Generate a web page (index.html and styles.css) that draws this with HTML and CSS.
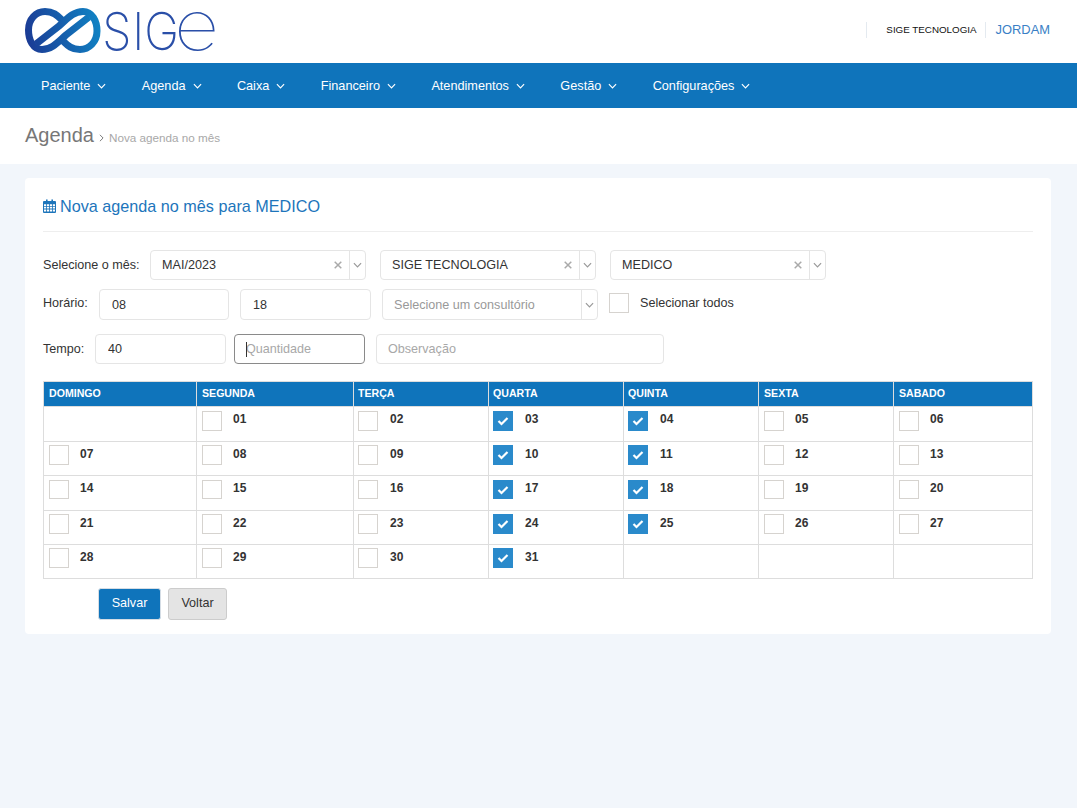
FILE: index.html
```html
<!DOCTYPE html>
<html lang="pt-BR">
<head>
<meta charset="utf-8">
<title>SIGE - Nova agenda no mês</title>
<link rel="stylesheet" href="styles.css">
</head>
<body>
<svg width="0" height="0" class="defs">
  <defs>
    <symbol id="chev" viewBox="0 0 10 6"><path d="M1 1l4 4 4-4" fill="none" stroke="currentColor" stroke-width="1.3"/></symbol>
    <symbol id="tick" viewBox="0 0 12 10"><path d="M1.5 5l3 3 6-6" fill="none" stroke="#fff" stroke-width="2.2"/></symbol>
    <symbol id="x" viewBox="0 0 8 8"><path d="M.7.7l6.6 6.6M7.3.7L.7 7.3" fill="none" stroke="currentColor" stroke-width="1.5"/></symbol>
  </defs>
</svg>
<header class="top">
  <a class="logo" href="#">
    <svg class="logo-mark" width="190" height="46" viewBox="0 0 190 46">
      <defs>
        <linearGradient id="lg" gradientUnits="userSpaceOnUse" x1="0" y1="30" x2="75" y2="15"><stop offset="0" stop-color="#1b3a94"/><stop offset="1" stop-color="#1083c4"/></linearGradient>
        <linearGradient id="lt" gradientUnits="userSpaceOnUse" x1="80" y1="0" x2="190" y2="0"><stop offset="0" stop-color="#2a4fa8"/><stop offset="1" stop-color="#3d9ad0"/></linearGradient>
      </defs>
      <g fill="none" stroke="url(#lg)" stroke-width="7">
        <path d="M11 36L34 18C42 11 48 3.500 58 3.500 67 3.500 72 13 72 23 72 34 64 41.500 55 41.500 47 41.500 43 38 38 33"/>
        <path d="M64 9L41 27C33 34 27 41.500 17 41.500 8 41.500 3.500 32 3.500 22 3.500 11 11 3.500 20 3.500 28 3.500 32 7 37 12"/>
      </g>
      <text class="logo-text" transform="translate(77.250,42) scale(.9,1)" x="0 33.300 46.600" fill="url(#lt)">SIG</text>
      <text class="logo-text logo-e" transform="translate(149,42) scale(1.13,1)" fill="url(#lt)">e</text>
    </svg>
  </a>
  <div class="top-user">
    <span class="company">SIGE TECNOLOGIA</span>
    <span class="user">JORDAM</span>
  </div>
</header>
<nav class="nav">
  <a class="nav-item">Paciente<svg class="nav-chev"><use href="#chev"/></svg></a>
  <a class="nav-item">Agenda<svg class="nav-chev"><use href="#chev"/></svg></a>
  <a class="nav-item">Caixa<svg class="nav-chev"><use href="#chev"/></svg></a>
  <a class="nav-item">Financeiro<svg class="nav-chev"><use href="#chev"/></svg></a>
  <a class="nav-item">Atendimentos<svg class="nav-chev"><use href="#chev"/></svg></a>
  <a class="nav-item">Gestão<svg class="nav-chev"><use href="#chev"/></svg></a>
  <a class="nav-item">Configurações<svg class="nav-chev"><use href="#chev"/></svg></a>
</nav>
<div class="crumb">
  <h1 class="crumb-title">Agenda</h1>
  <svg class="crumb-sep" viewBox="0 0 6 10"><path d="M1 1l4 4-4 4" fill="none" stroke="currentColor" stroke-width="1.2"/></svg>
  <span class="crumb-sub">Nova agenda no mês</span>
</div>
<main class="card">
  <h2 class="card-title">
    <svg class="cal" width="13" height="14" viewBox="0 0 13 14">
      <path fill="#1d75bb" d="M1 2h2V.6h1.6V2h3.8V.6H10V2h2a1 1 0 0 1 1 1v10a1 1 0 0 1-1 1H1a1 1 0 0 1-1-1V3a1 1 0 0 1 1-1z"/>
      <path fill="#fff" d="M1 5.2h2.2v1.8H1zM4 5.2h2.2v1.8H4zM7 5.2h2.2v1.8H7zM10 5.2h2v1.8h-2zM1 7.8h2.2v1.8H1zM4 7.8h2.2v1.8H4zM7 7.8h2.2v1.8H7zM10 7.8h2v1.8h-2zM1 10.4h2.2v2.2H1zM4 10.4h2.2v2.2H4zM7 10.4h2.2v2.2H7zM10 10.4h2v2.2h-2z"/>
    </svg>
    Nova agenda no mês para MEDICO
  </h2>
  <div class="row row-1">
    <label class="lbl lbl-mes">Selecione o mês:</label>
    <div class="select s1"><span class="select-val">MAI/2023</span><svg class="sel-x"><use href="#x"/></svg><span class="sel-arrow"><svg class="sel-chev"><use href="#chev"/></svg></span></div>
    <div class="select s1 ml14"><span class="select-val">SIGE TECNOLOGIA</span><svg class="sel-x"><use href="#x"/></svg><span class="sel-arrow"><svg class="sel-chev"><use href="#chev"/></svg></span></div>
    <div class="select s1 ml14"><span class="select-val">MEDICO</span><svg class="sel-x"><use href="#x"/></svg><span class="sel-arrow"><svg class="sel-chev"><use href="#chev"/></svg></span></div>
  </div>
  <div class="row row-2">
    <label class="lbl lbl-hor">Horário:</label>
    <input class="field f-a" value="08">
    <input class="field f-b" value="18">
    <div class="select s2"><span class="select-val muted">Selecione um consultório</span><span class="sel-arrow"><svg class="sel-chev"><use href="#chev"/></svg></span></div>
    <span class="cb cb-all"></span>
    <span class="lbl lbl-all">Selecionar todos</span>
  </div>
  <div class="row row-3">
    <label class="lbl lbl-tem">Tempo:</label>
    <input class="field f-c" value="40">
    <div class="field f-d is-focus"><span class="caret"></span>Quantidade</div>
    <input class="field f-e" placeholder="Observação">
  </div>
  <table class="cal-table">
    <thead>
      <tr><th>DOMINGO</th><th>SEGUNDA</th><th>TERÇA</th><th>QUARTA</th><th>QUINTA</th><th>SEXTA</th><th>SABADO</th></tr>
    </thead>
    <tbody>
      <tr>
        <td></td>
        <td><span class="day"><span class="cb"></span><b>01</b></span></td>
        <td><span class="day"><span class="cb"></span><b>02</b></span></td>
        <td><span class="day"><span class="cb on"><svg class="tick"><use href="#tick"/></svg></span><b>03</b></span></td>
        <td><span class="day"><span class="cb on"><svg class="tick"><use href="#tick"/></svg></span><b>04</b></span></td>
        <td><span class="day"><span class="cb"></span><b>05</b></span></td>
        <td><span class="day"><span class="cb"></span><b>06</b></span></td>
      </tr>
      <tr>
        <td><span class="day"><span class="cb"></span><b>07</b></span></td>
        <td><span class="day"><span class="cb"></span><b>08</b></span></td>
        <td><span class="day"><span class="cb"></span><b>09</b></span></td>
        <td><span class="day"><span class="cb on"><svg class="tick"><use href="#tick"/></svg></span><b>10</b></span></td>
        <td><span class="day"><span class="cb on"><svg class="tick"><use href="#tick"/></svg></span><b>11</b></span></td>
        <td><span class="day"><span class="cb"></span><b>12</b></span></td>
        <td><span class="day"><span class="cb"></span><b>13</b></span></td>
      </tr>
      <tr>
        <td><span class="day"><span class="cb"></span><b>14</b></span></td>
        <td><span class="day"><span class="cb"></span><b>15</b></span></td>
        <td><span class="day"><span class="cb"></span><b>16</b></span></td>
        <td><span class="day"><span class="cb on"><svg class="tick"><use href="#tick"/></svg></span><b>17</b></span></td>
        <td><span class="day"><span class="cb on"><svg class="tick"><use href="#tick"/></svg></span><b>18</b></span></td>
        <td><span class="day"><span class="cb"></span><b>19</b></span></td>
        <td><span class="day"><span class="cb"></span><b>20</b></span></td>
      </tr>
      <tr>
        <td><span class="day"><span class="cb"></span><b>21</b></span></td>
        <td><span class="day"><span class="cb"></span><b>22</b></span></td>
        <td><span class="day"><span class="cb"></span><b>23</b></span></td>
        <td><span class="day"><span class="cb on"><svg class="tick"><use href="#tick"/></svg></span><b>24</b></span></td>
        <td><span class="day"><span class="cb on"><svg class="tick"><use href="#tick"/></svg></span><b>25</b></span></td>
        <td><span class="day"><span class="cb"></span><b>26</b></span></td>
        <td><span class="day"><span class="cb"></span><b>27</b></span></td>
      </tr>
      <tr>
        <td><span class="day"><span class="cb"></span><b>28</b></span></td>
        <td><span class="day"><span class="cb"></span><b>29</b></span></td>
        <td><span class="day"><span class="cb"></span><b>30</b></span></td>
        <td><span class="day"><span class="cb on"><svg class="tick"><use href="#tick"/></svg></span><b>31</b></span></td>
        <td></td>
        <td></td>
        <td></td>
      </tr>
    </tbody>
  </table>
  <div class="actions">
    <button class="btn btn-primary">Salvar</button>
    <button class="btn btn-default">Voltar</button>
  </div>
</main>
</body>
</html>
```
FILE: styles.css
```css
* { box-sizing: border-box; }
html, body { margin: 0; padding: 0; }
body {
  min-height: 808px;
  background: #f2f6fb;
  font-family: "Liberation Sans", Arial, sans-serif;
  font-size: 13px;
  color: #333;
}
.defs { position: absolute; }

/* Header */
.top {
  height: 63px;
  background: #fff;
  display: flex;
  align-items: flex-start;
  justify-content: space-between;
  padding: 0 27px 0 25px;
}
.logo { display: block; margin-top: 8px; height: 46px; }
.logo-mark { display: block; overflow: visible; }
.logo-text { font-family: Inter, "Liberation Sans", sans-serif; font-weight: 200; font-size: 52px; }
.logo-e { font-size: 70px; font-weight: 100; }
.top-user { display: flex; align-items: center; margin-top: 22px; height: 16px; }
.company {
  border-left: 1px solid #e4eaf0;
  border-right: 1px solid #e4eaf0;
  padding: 0 8px 0 19px;
  font-size: 9.8px;
  line-height: 16px;
  color: #111;
}
.user { padding-left: 10px; font-size: 12.9px; color: #3a7fc6; position: relative; top: -1px; }

/* Nav */
.nav {
  height: 45px;
  background: #0f74bb;
  display: flex;
  align-items: center;
  padding-left: 41px;
  color: #fff;
}
.nav-item {
  display: flex;
  align-items: center;
  margin-right: 35.4px;
  font-size: 12.7px;
  color: #fff;
}
.nav-chev { width: 9px; height: 6px; margin-left: 7px; }

/* Breadcrumb */
.crumb {
  height: 56px;
  background: #fff;
  display: flex;
  align-items: center;
  padding-left: 25px;
}
.crumb-title { margin: 0 0 2px; font-size: 20px; font-weight: 400; color: #777; }
.crumb-sep { width: 5px; height: 8px; margin: 3px 5px 0 5px; color: #777; }
.crumb-sub { font-size: 11.7px; color: #a8a8a8; margin-top: 3px; }

/* Card */
.card {
  margin: 14px 26px 0 25px;
  height: 456px;
  background: #fff;
  border-radius: 4px;
  padding: 18px;
}
.card-title {
  margin: 0 0 18px;
  height: 36px;
  border-bottom: 1px solid #eee;
  font-size: 16.2px;
  font-weight: 400;
  line-height: 20px;
  color: #1d75bb;
  display: flex;
  align-items: flex-start;
  gap: 4px;
}
.cal { margin-top: 3px; }

/* Form */
.row { display: flex; align-items: flex-start; }
.row-1 { height: 30px; }
.row-2 { height: 31px; margin-top: 9px; }
.row-3 { height: 30px; margin-top: 14px; }
.lbl { color: #333; font-size: 12.6px; line-height: 16px; }
.lbl-mes { width: 107px; margin-top: 7px; }
.lbl-hor { width: 56px; margin-top: 6px; }
.lbl-tem { width: 52px; margin-top: 7px; }
.lbl-all { margin: 6px 0 0 11px; }
.ml14 { margin-left: 14px; }

.select {
  display: flex;
  align-items: center;
  height: 30px;
  border: 1px solid #e5e5e5;
  border-radius: 4px;
  background: #fff;
  font-size: 12.6px;
  color: #333;
}
.s1 { width: 216px; }
.s2 { width: 216px; height: 31px; margin-left: 11px; }
.select-val { flex: 1; padding-left: 11px; white-space: nowrap; }
.muted { color: #999; }
.sel-x { width: 8px; height: 8px; margin-right: 7px; color: #aaa; }
.sel-arrow {
  width: 16px;
  align-self: stretch;
  border-left: 1px solid #e5e5e5;
  display: flex;
  align-items: center;
  justify-content: center;
  color: #999;
}
.sel-chev { width: 9px; height: 6px; }

.field {
  height: 30px;
  border: 1px solid #e5e5e5;
  border-radius: 4px;
  background: #fff;
  padding: 0 12px;
  font: 12.6px "Liberation Sans", Arial, sans-serif;
  color: #333;
  outline: none;
  display: block;
}
.field::placeholder { color: #a8a8a8; opacity: 1; }
.f-a { width: 130px; height: 31px; }
.f-b { width: 131px; height: 31px; margin-left: 11px; }
.f-c { width: 131px; }
.f-d { width: 131px; margin-left: 8px; padding: 0 0 0 11px; line-height: 28px; color: #a8a8a8; position: relative; }
.f-e { width: 288px; margin-left: 11px; padding: 0 11px; }
.is-focus { border-color: #8a8a8a; }
.caret { position: absolute; left: 11px; top: 7px; width: 1px; height: 15px; background: #333; }

/* Checkboxes */
.cb {
  display: inline-flex;
  align-items: center;
  justify-content: center;
  flex: none;
  width: 20px;
  height: 20px;
  border: 1px solid #d6d3cf;
  background: #fff;
}
.cb.on { background: #2a8acb; border-color: #2a8acb; }
.cb-all { margin: 4px 0 0 11px; }
.tick { width: 12px; height: 10px; }

/* Table */
.cal-table {
  width: 990px;
  margin-top: 17px;
  border-collapse: collapse;
  table-layout: fixed;
  border: 1px solid #ddd;
}
.cal-table th {
  height: 25px;
  padding: 0 0 2px 5px;
  background: #0f74bb;
  border: 1px solid #ddd;
  color: #fff;
  font-size: 10.6px;
  font-weight: 700;
  text-align: left;
}
.cal-table th:nth-child(1) { width: 153px; }
.cal-table th:nth-child(2) { width: 157px; }
.cal-table th:nth-child(3),
.cal-table th:nth-child(4),
.cal-table th:nth-child(5),
.cal-table th:nth-child(6) { width: 135px; }
.cal-table th:nth-child(3),
.cal-table th:nth-child(4),
.cal-table th:nth-child(5) { padding-left: 4px; }
.cal-table td {
  height: 34px;
  padding: 3px 0 0 5px;
  border: 1px solid #ddd;
  vertical-align: top;
}
.cal-table tbody tr:nth-child(1) td,
.cal-table tbody tr:nth-child(3) td { height: 35px; padding-top: 4px; }
.cal-table tbody tr:nth-child(3) .cb { height: 19px; }
.cal-table td:nth-child(3) .cb,
.cal-table td:nth-child(4) .cb,
.cal-table td:nth-child(5) .cb { margin: 0 1px 0 -1px; }
.day { display: flex; align-items: flex-start; }
.day b { margin: 1px 0 0 11px; font-size: 12px; line-height: 16px; color: #333; }
.cal-table tbody tr:nth-child(1) b,
.cal-table tbody tr:nth-child(3) b { margin-top: 0; }

/* Actions */
.actions { display: flex; gap: 7px; margin: 9px 0 0 55px; }
.btn {
  height: 32px;
  border-radius: 3px;
  font: 12.6px "Liberation Sans", Arial, sans-serif;
  padding: 0 0 2px;
}
.btn-primary { width: 63px; background: #0f74bb; border: 1px solid #d5dde5; color: #fff; }
.btn-default { width: 59px; background: #e4e4e4; border: 1px solid #ccc; color: #333; }
```
